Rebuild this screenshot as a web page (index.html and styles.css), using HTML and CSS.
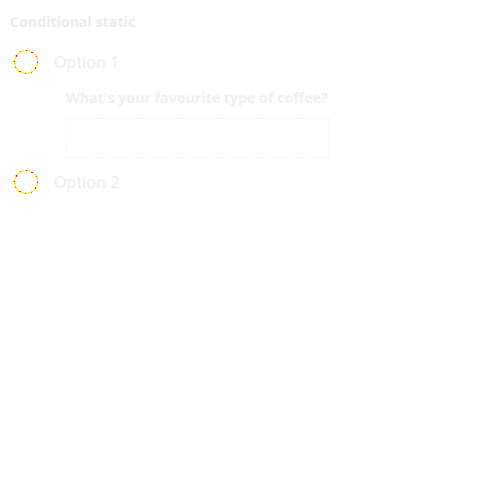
FILE: index.html
```html
<!DOCTYPE html>
<html>
<head>
<meta charset="utf-8">
<link rel="stylesheet" href="styles.css">
</head>
<body>
<div class="form">
  <div class="title">Conditional static</div>
  <div class="option">
    <span class="radio"></span>
    <span class="label">Option 1</span>
  </div>
  <div class="sub">
    <div class="question">What's your favourite type of coffee?</div>
    <div class="input"></div>
  </div>
  <div class="option">
    <span class="radio"></span>
    <span class="label">Option 2</span>
  </div>
</div>
</body>
</html>
```
FILE: styles.css
```css
html, body {
  margin: 0;
  padding: 0;
  background: #ffffff;
}
body {
  font-family: "Open Sans", sans-serif;
  color: #ebebeb;
}
.form {
  padding: 12px 10px;
  display: flex;
  flex-direction: column;
}
.title {
  font-size: 14.2px;
  font-weight: 700;
  line-height: 20px;
}
.option {
  display: flex;
  align-items: center;
  gap: 16px;
  margin-top: 18px;
  padding-left: 4px;
}
.radio {
  width: 24px;
  height: 24px;
  border-radius: 50%;
  background:
    radial-gradient(circle closest-side, #ffffff 0 10.8px, transparent 11px),
    repeating-conic-gradient(#ff0000 0 5deg, #ffee00 5deg 30deg);
  flex: none;
}
.label {
  font-size: 16.2px;
  line-height: 24px;
}
.sub {
  padding-left: 56px;
  margin-top: 14px;
}
.question {
  font-size: 14.2px;
  font-weight: 700;
  line-height: 20px;
  color: #f0f0f0;
}
.input {
  margin-top: 10px;
  width: 261px;
  height: 38px;
  border: 1px dashed #f5f5f5;
}
.sub + .option {
  margin-top: 12px;
}
```
